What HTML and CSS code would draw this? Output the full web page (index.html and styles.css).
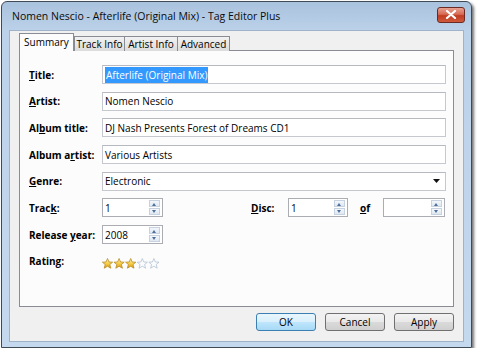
FILE: index.html
```html
<!DOCTYPE html>
<html lang="en">
<head>
    <meta charset="UTF-8">
    <title>Tag Editor Plus</title>
    <link rel="stylesheet" href="styles.css">
</head>
<body>
    <div class="ventana">
        <div class="titulo">
            <span class="titulo-texto">Nomen Nescio - Afterlife (Original Mix) - Tag Editor Plus</span>
            <div class="cerrar">
                <svg width="12" height="9" viewBox="0 0 12 9">
                    <path d="M2 1 L10 8 M10 1 L2 8" stroke="#fff" stroke-width="2.2" stroke-linecap="round"/>
                </svg>
            </div>
        </div>

        <div class="interior">
            <div class="pestanas">
                <div class="pestana activa" style="width:55px">Summary</div>
                <div class="pestana" style="width:51px">Track Info</div>
                <div class="pestana" style="width:54px">Artist Info</div>
                <div class="pestana" style="width:53px">Advanced</div>
            </div>

            <div class="panel">
                <div class="fila">
                    <label class="etiqueta"><u>T</u>itle:</label>
                    <div class="campo"><span class="seleccion">Afterlife (Original Mix)</span></div>
                </div>
                <div class="fila">
                    <label class="etiqueta"><u>A</u>rtist:</label>
                    <div class="campo">Nomen Nescio</div>
                </div>
                <div class="fila">
                    <label class="etiqueta">Al<u>b</u>um title:</label>
                    <div class="campo">DJ Nash Presents Forest of Dreams CD1</div>
                </div>
                <div class="fila">
                    <label class="etiqueta">Album a<u>r</u>tist:</label>
                    <div class="campo">Various Artists</div>
                </div>
                <div class="fila">
                    <label class="etiqueta"><u>G</u>enre:</label>
                    <div class="campo combo">
                        <span>Electronic</span>
                        <svg width="7" height="4" viewBox="0 0 7 4"><path d="M0 0 H7 L3.5 4 Z" fill="#111"/></svg>
                    </div>
                </div>
                <div class="fila">
                    <label class="etiqueta">Trac<u>k</u>:</label>
                    <div class="campo giro ancho-track"><span>1</span><div class="flechas"><i class="arriba"></i><i class="abajo"></i></div></div>
                    <label class="etiqueta-disc"><u>D</u>isc:</label>
                    <div class="campo giro ancho-disc"><span>1</span><div class="flechas"><i class="arriba"></i><i class="abajo"></i></div></div>
                    <label class="etiqueta-of"><u>o</u>f</label>
                    <div class="campo giro ancho-of"><span></span><div class="flechas"><i class="arriba"></i><i class="abajo"></i></div></div>
                </div>
                <div class="fila">
                    <label class="etiqueta">Release <u>y</u>ear:</label>
                    <div class="campo giro ancho-track"><span>2008</span><div class="flechas"><i class="arriba"></i><i class="abajo"></i></div></div>
                </div>
                <div class="fila">
                    <label class="etiqueta">Rating:</label>
                    <div class="estrellas">
                        <svg width="60" height="11" viewBox="0 0 60 11">
                            <defs>
                                <linearGradient id="oro" x1="0" y1="0" x2="0" y2="1">
                                    <stop offset="0" stop-color="#fff6c8"/>
                                    <stop offset="0.5" stop-color="#f7cf4a"/>
                                    <stop offset="1" stop-color="#d99a14"/>
                                </linearGradient>
                            </defs>
                            <g stroke-width="0.8" stroke-linejoin="round">
                                <path d="M5.5 0.5 L7 4 L10.6 4.2 L7.8 6.5 L8.8 10.2 L5.5 8.2 L2.2 10.2 L3.2 6.5 L0.4 4.2 L4 4 Z" fill="url(#oro)" stroke="#b98b22"/>
                                <path transform="translate(11.6 0)" d="M5.5 0.5 L7 4 L10.6 4.2 L7.8 6.5 L8.8 10.2 L5.5 8.2 L2.2 10.2 L3.2 6.5 L0.4 4.2 L4 4 Z" fill="url(#oro)" stroke="#b98b22"/>
                                <path transform="translate(23.2 0)" d="M5.5 0.5 L7 4 L10.6 4.2 L7.8 6.5 L8.8 10.2 L5.5 8.2 L2.2 10.2 L3.2 6.5 L0.4 4.2 L4 4 Z" fill="url(#oro)" stroke="#b98b22"/>
                                <path transform="translate(34.8 0)" d="M5.5 0.5 L7 4 L10.6 4.2 L7.8 6.5 L8.8 10.2 L5.5 8.2 L2.2 10.2 L3.2 6.5 L0.4 4.2 L4 4 Z" fill="#fbfcfe" stroke="#b4c2d4"/>
                                <path transform="translate(46.4 0)" d="M5.5 0.5 L7 4 L10.6 4.2 L7.8 6.5 L8.8 10.2 L5.5 8.2 L2.2 10.2 L3.2 6.5 L0.4 4.2 L4 4 Z" fill="#fbfcfe" stroke="#b4c2d4"/>
                            </g>
                        </svg>
                    </div>
                </div>
            </div>

            <div class="botones">
                <button class="boton defecto">OK</button>
                <button class="boton">Cancel</button>
                <button class="boton">Apply</button>
            </div>
        </div>
    </div>
</body>
</html>
```

FILE: styles.css
```css
body {
    margin: 0;
    background-color: #fff;
    font-family: "Open Sans", "Liberation Sans", sans-serif;
    font-size: 10px;
    color: #000;
}

.ventana {
    margin: 1px 0 0 1px;
    width: 471px;
    height: 347px;
    box-sizing: border-box;
    border: 1px solid #3f4a55;
    border-radius: 6px 6px 0 0;
    background: linear-gradient(to bottom, #a9c2dd 0px, #bcd2ea 30px, #c4d8ee 100%);
    box-shadow: 2px 2px 3px rgba(0, 0, 0, 0.55);
    display: flex;
    flex-direction: column;
}

.titulo {
    height: 28px;
    display: flex;
    align-items: center;
    justify-content: space-between;
    padding: 0 6px 0 10px;
}

.titulo-texto {
    font-size: 10.5px;
    color: #0b0b0b;
}

.cerrar {
    width: 26px;
    height: 14px;
    margin-top: -3px;
    border: 1px solid #6b2a22;
    border-radius: 3px;
    background: linear-gradient(to bottom, #e8a293 0%, #d76a55 45%, #c13c22 55%, #cf5b3c 100%);
    display: flex;
    align-items: center;
    justify-content: center;
}

.interior {
    flex: 1;
    margin: 0 7px 5px 7px;
    border: 1px solid #9fb2c8;
    background-color: #f0f0f0;
    padding: 2px 9px 0 9px;
    display: flex;
    flex-direction: column;
}

.pestanas {
    display: flex;
    align-items: flex-end;
    height: 18px;
    margin-bottom: -1px;
    position: relative;
    z-index: 1;
}

.pestana {
    height: 15px;
    box-sizing: border-box;
    border: 1px solid #898c95;
    border-bottom: none;
    margin-left: -1px;
    background: linear-gradient(to bottom, #f2f2f2, #dcdcdc);
    text-align: center;
    line-height: 14px;
    white-space: nowrap;
}

.pestana.activa {
    height: 18px;
    margin-left: 0;
    margin-right: 1px;
    background: #fcfcfc;
    line-height: 17px;
}

.panel {
    height: 257px;
    box-sizing: border-box;
    border: 1px solid #898c95;
    background-color: #fcfcfc;
    padding: 14px 7px 0 9px;
    display: flex;
    flex-direction: column;
    gap: 7.7px;
}

.fila {
    display: flex;
    align-items: center;
    height: 19px;
}

.etiqueta {
    width: 73px;
    font-weight: bold;
    white-space: nowrap;
}

.campo {
    flex: 1;
    height: 19px;
    box-sizing: border-box;
    border: 1px solid #c5c9cf;
    border-top-color: #b6bac0;
    background-color: #fff;
    padding: 0 2px;
    display: flex;
    align-items: center;
    white-space: nowrap;
}

.seleccion {
    background-color: #3399ff;
    color: #fff;
    padding: 1px 1px;
}

.combo {
    justify-content: space-between;
    padding-right: 5px;
}

.giro {
    flex: none;
    justify-content: space-between;
    padding-right: 2px;
    border-color: #abadb3;
}

.ancho-track {
    width: 61px;
}

.ancho-disc {
    width: 60px;
}

.ancho-of {
    width: 62px;
}

.etiqueta-disc {
    margin-left: 88px;
    width: 37px;
    font-weight: bold;
}

.etiqueta-of {
    margin-left: 12px;
    width: 23px;
    font-weight: bold;
}

.flechas {
    width: 11px;
    height: 15px;
    display: flex;
    flex-direction: column;
    gap: 1px;
}

.flechas i {
    flex: 1;
    border: 1px solid #c6d2e0;
    background: linear-gradient(to bottom, #f4f7fb, #dfe7f1);
    position: relative;
}

.flechas i::after {
    content: "";
    position: absolute;
    left: 2px;
    top: 2px;
    border-left: 2.5px solid transparent;
    border-right: 2.5px solid transparent;
}

.flechas .arriba::after {
    border-bottom: 3px solid #4d6f99;
}

.flechas .abajo::after {
    top: 1px;
    border-top: 3px solid #4d6f99;
}

.estrellas {
    display: flex;
    align-items: center;
    padding-top: 4px;
}

.botones {
    display: flex;
    justify-content: flex-end;
    gap: 9px;
    padding-top: 6px;
}

.boton {
    width: 60px;
    height: 18px;
    padding: 0;
    border: 1px solid #707070;
    border-radius: 3px;
    background: linear-gradient(to bottom, #f3f3f3 0%, #e9e9e9 48%, #dadada 52%, #cfcfcf 100%);
    font-family: "Open Sans", "Liberation Sans", sans-serif;
    font-size: 10px;
    color: #000;
}

.boton.defecto {
    border-color: #3c7fb1;
    background: linear-gradient(to bottom, #eaf6fd 0%, #d9f0fc 48%, #bee6fd 52%, #a7d9f5 100%);
}
```
